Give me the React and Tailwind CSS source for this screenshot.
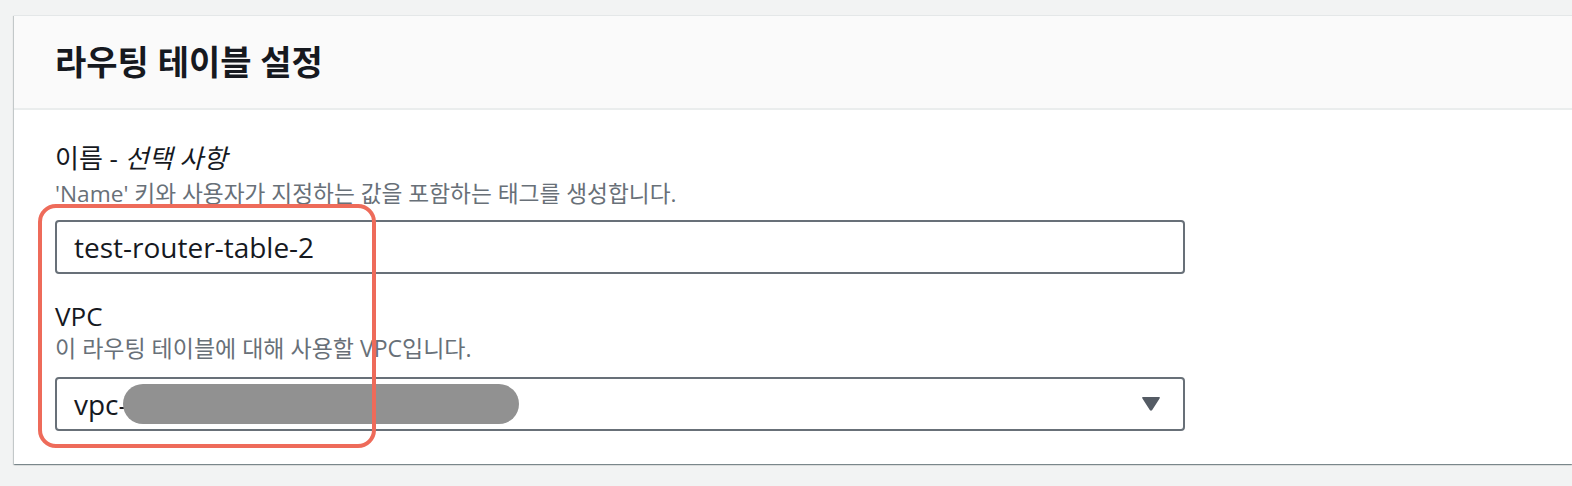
export default function App() {
  return (
    <div
      className="h-[486px] w-full overflow-hidden bg-[#f2f3f3] pl-[14px] pt-[15px]"
      style={{ fontFamily: '"Open Sans", "Noto Sans CJK KR", sans-serif' }}
    >
      {/* ── Card ── */}
      <div className="bg-white border-t border-[#e4e7e8] shadow-[0_1px_1px_0_rgba(0,28,36,0.3),1px_1px_1px_0_rgba(0,28,36,0.15),-1px_1px_1px_0_rgba(0,28,36,0.15)]">
        {/* Header */}
        <div className="h-[94px] bg-[#fafafa] border-b-2 border-[#eaeded] pl-[41px] flex items-center">
          <h2 className="text-[34px] leading-[40px] font-bold text-[#16191f]">
            라우팅 테이블 설정
          </h2>
        </div>

        {/* Body */}
        <div className="relative pl-[41px] pt-[33px] pb-[33px]">
          <div className="w-[1130px]">
            <p className="text-[26px] leading-[30px] text-[#16191f]">
              이름 - <i>선택 사항</i>
            </p>
            <p className="mt-[8px] text-[22.7px] leading-[26px] text-[#687078]">
              <span className="inline-block leading-[21px] border-b-2 border-[#8d949c]">'Name'</span> 키와 사용자가 지정하는 값을 포함하는 태그를 생성합니다.
            </p>
            <div className="mt-[13px] h-[54px] rounded-[4px] border-2 border-[#687078] flex items-center pl-[17px]">
              <span className="text-[28px] text-[#16191f]">test-router-table-2</span>
            </div>

            <p className="mt-[27px] text-[26px] leading-[30px] text-[#16191f]">VPC</p>
            <p className="mt-[4px] text-[23px] leading-[26px] text-[#687078]">
              이 라우팅 테이블에 대해 사용할 VPC입니다.
            </p>
            <div className="mt-[16px] h-[54px] rounded-[4px] border-2 border-[#687078] flex items-center pl-[17px] pr-[22px]">
              <span className="text-[28px] text-[#16191f]">vpc-</span>
              <div className="h-[40px] w-[396px] rounded-full bg-[#919191] -ml-[5px]" />
              <svg className="ml-auto" width="20" height="16" viewBox="0 0 20 16">
                <path d="M2 1 H18 Q19.5 1 18.6 2.4 L11.2 14 Q10 15.6 8.8 14 L1.4 2.4 Q0.5 1 2 1 Z" fill="#545b64" />
              </svg>
            </div>
          </div>

          {/* Annotation outline */}
          <div className="absolute left-[24px] top-[94px] w-[338px] h-[244px] rounded-[18px] border-4 border-[#ee6b5a] pointer-events-none" />
        </div>
      </div>
    </div>
  );
}
